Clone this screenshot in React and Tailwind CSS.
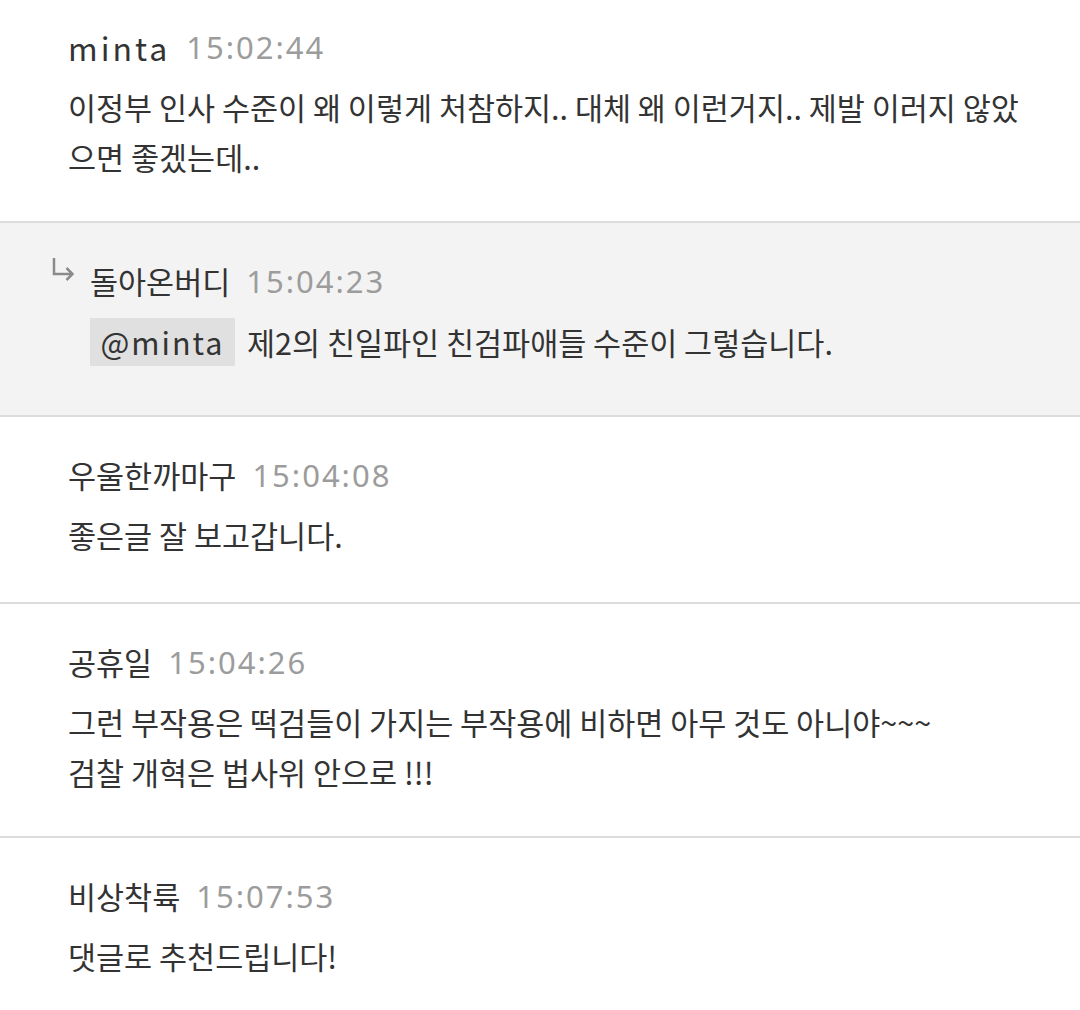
import React from "react";

const kr = "font-['Noto_Sans_CJK_KR','Noto_Sans',sans-serif]";

function Header({ name, time, latin }) {
  return (
    <div className="flex items-center h-[50px]">
      <span
        className={`leading-[50px] text-[#333333] ${kr} ${
          latin ? "text-[32px] tracking-[3px]" : "text-[30.5px]"
        }`}
      >
        {name}
      </span>
      <span className="ml-4 text-[31px] leading-[50px] tracking-[2px] text-[#9c9c9c] font-['Noto_Sans',sans-serif]">
        {time}
      </span>
    </div>
  );
}

function Body({ lines }) {
  return (
    <div className={`mt-[10px] text-[30.5px] leading-[50px] text-[#333333] ${kr}`}>
      {lines.map((l, i) => (
        <div key={i} className="whitespace-nowrap">{l}</div>
      ))}
    </div>
  );
}

function Comment({ name, time, lines, pt, pb, last, latin }) {
  return (
    <div
      className={`pl-[68px] pr-6 ${pt} ${pb} bg-white ${
        last ? "" : "border-b-2 border-[#dcdcdc]"
      }`}
    >
      <Header name={name} time={time} latin={latin} />
      <Body lines={lines} />
    </div>
  );
}

export default function App() {
  return (
    <div className="w-[1080px] h-[1010px] bg-white overflow-hidden">
      <Comment
        latin
        pt="pt-[22px]"
        pb="pb-[39px]"
        name="minta"
        time="15:02:44"
        lines={[
          "이정부 인사 수준이 왜 이렇게 처참하지.. 대체 왜 이런거지.. 제발 이러지 않았",
          "으면 좋겠는데..",
        ]}
      />
      <div className="flex pl-[52px] pt-[33px] pb-[49px] bg-[#f3f3f3] border-b-2 border-[#dcdcdc]">
        <svg width="22" height="26" viewBox="0 0 22 26" className="mt-[1px] shrink-0">
          <path d="M2 1 V17 H20" fill="none" stroke="#8a8a8a" strokeWidth="2.5" />
          <path d="M14.5 11 L20.5 17 L14.5 23" fill="none" stroke="#8a8a8a" strokeWidth="2.5" />
        </svg>
        <div className="ml-[16px]">
          <Header name="돌아온버디" time="15:04:23" />
          <div className={`mt-[12px] flex items-center text-[30.5px] leading-[48px] text-[#333333] ${kr}`}>
            <span className="h-[48px] w-[145px] flex items-center justify-center bg-[#e0e0e0] text-[#333333] tracking-[2px]">
              @minta
            </span>
            <span className="ml-3 whitespace-nowrap">제2의 친일파인 친검파애들 수준이 그렇습니다.</span>
          </div>
        </div>
      </div>
      <Comment pt="pt-[33px]" pb="pb-[42px]" name="우울한까마구" time="15:04:08" lines={["좋은글 잘 보고갑니다."]} />
      <Comment
        pt="pt-[33px]"
        pb="pb-[39px]"
        name="공휴일"
        time="15:04:26"
        lines={[
          "그런 부작용은 떡검들이 가지는 부작용에 비하면 아무 것도 아니야~~~",
          "검찰 개혁은 법사위 안으로 !!!",
        ]}
      />
      <Comment last pt="pt-[33px]" pb="pb-[39px]" name="비상착륙" time="15:07:53" lines={["댓글로 추천드립니다!"]} />
    </div>
  );
}
